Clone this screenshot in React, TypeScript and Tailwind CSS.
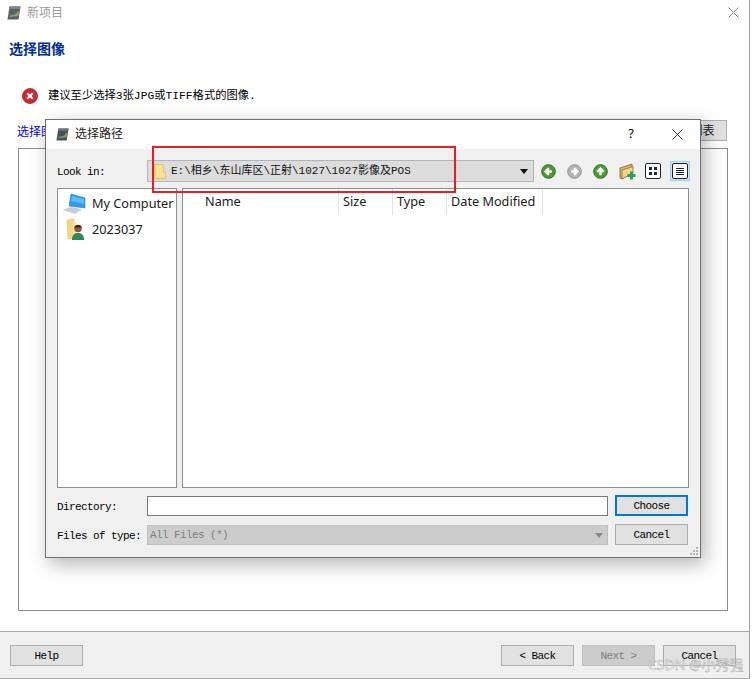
const mono = "font-['Liberation_Mono','Noto_Sans_CJK_SC',monospace]";
const sans = "font-['Noto_Sans','Noto_Sans_CJK_SC',sans-serif]";

function AppIcon({ className }: { className: string }) {
  return (
    <svg viewBox="0 0 14 14" className={className}>
      <path d="M2.5 0.5 H13.5 L11.5 13.5 H0.5 Z" fill="#46525a" />
      <path d="M3 9.5 L8 8.5 L12 4.5 L11.6 10 L2.5 11 Z" fill="#7d9a5a" />
      <path d="M2.5 0.5 H13.5 L13 3 H2 Z" fill="#6d7880" />
    </svg>
  );
}

function ErrorIcon() {
  return (
    <svg viewBox="0 0 16 16" className="w-4 h-4 shrink-0">
      <circle cx="8" cy="8" r="7.6" fill="#d7222e" />
      <circle cx="8" cy="8" r="7.6" fill="none" stroke="#7d1b22" strokeWidth="0.6" />
      <path d="M5.2 5.2 L10.8 10.8 M10.8 5.2 L5.2 10.8" stroke="#fff" strokeWidth="2.2" />
    </svg>
  );
}

function NavArrow({ color, dark, dir }: { color: string; dark: string; dir: 'left' | 'right' | 'up' }) {
  const paths = {
    left: 'M11.5 8 H6 M8.5 4.5 L5 8 L8.5 11.5',
    right: 'M4.5 8 H10 M7.5 4.5 L11 8 L7.5 11.5',
    up: 'M8 12 V6 M4.5 8.5 L8 5 L11.5 8.5',
  };
  return (
    <svg viewBox="0 0 16 16" className="w-[15px] h-[15px] shrink-0">
      <circle cx="8" cy="8" r="7.3" fill={color} stroke={dark} strokeWidth="1" />
      <path d={paths[dir]} stroke="#fff" strokeWidth="2.6" fill="none" />
    </svg>
  );
}

function NewFolderIcon() {
  return (
    <svg viewBox="0 0 17 17" className="w-[17px] h-[17px] shrink-0">
      <path d="M1 5 L10 2 L13 1 V10 L3 16 L1 15 Z" fill="#e2b45f" stroke="#7d6233" strokeWidth="0.8" />
      <path d="M3 7 L14 3.5 V10 L3 16 Z" fill="#f3d48b" stroke="#8a6c38" strokeWidth="0.8" />
      <path d="M12.5 8.5 V16.5 M8.5 12.5 H16.5" stroke="#2e9e57" strokeWidth="3" />
    </svg>
  );
}

function ViewButton({ active, children }: { active?: boolean; children: React.ReactNode }) {
  return (
    <div className={`w-[20px] h-[20px] shrink-0 flex items-center justify-center ${active ? 'bg-[#cce4f7] border border-[#99d1ff]' : ''}`}>
      <div className="w-[16px] h-[16px] bg-white border border-[#1c2430] rounded-[2px] flex items-center justify-center">
        {children}
      </div>
    </div>
  );
}

function ComputerIcon() {
  return (
    <svg viewBox="0 0 24 22" className="w-6 h-[22px] shrink-0">
      <path d="M9 1 L23 5 V15 L7 13 Z" fill="#2f9be6" stroke="#1a76ba" strokeWidth="0.5" />
      <path d="M10 3 L22 6 V11 L9 8 Z" fill="#5dbcf3" />
      <path d="M1 17 L8 14 L20 16 L13 21 Z" fill="#c9cdd1" />
    </svg>
  );
}

function UserFolderIcon() {
  return (
    <svg viewBox="0 0 20 24" className="w-5 h-6 shrink-0">
      <path d="M1 2 L8 1 V20 L2 21 Z" fill="#f6d77f" stroke="#d9b656" strokeWidth="0.5" />
      <rect x="7" y="4" width="3" height="16" fill="#fbe7a8" />
      <path d="M6 22 C6 16 9 15 12 15 C15 15 18 16 18 22 Z" fill="#2e8a5e" />
      <circle cx="12" cy="10.5" r="3.8" fill="#8a5c3e" />
      <path d="M8.3 9.5 C9 6 15 6 15.8 9.5 Z" fill="#33241b" />
    </svg>
  );
}

function QtButton({ label, variant = 'normal', className = '' }: { label: string; variant?: 'normal' | 'focus' | 'disabled'; className?: string }) {
  const look =
    variant === 'focus'
      ? 'bg-[#e1e1e1] border-2 border-[#0078d7] text-black'
      : variant === 'disabled'
        ? 'bg-[#cccccc] border border-[#bfbfbf] text-[#7f7f7f]'
        : 'bg-[#e1e1e1] border border-[#adadad] text-black';
  return (
    <button className={`w-[73px] h-[21px] shrink-0 pt-[2px] text-[11px] tracking-[-0.6px] leading-none whitespace-pre ${mono} ${look} ${className}`}>
      {label}
    </button>
  );
}

function ColumnHeader({ label, width }: { label: string; width: string }) {
  return (
    <div className={`${width} h-[26px] pl-[4px] flex items-center border-r border-[#e5e5e5] text-[12.7px] text-[#1a1a1a]`}>
      {label}
    </div>
  );
}

function FileDialog() {
  const label = `w-[90px] shrink-0 pt-[3px] whitespace-nowrap text-[11px] tracking-[-0.6px] text-black ${mono}`;
  return (
    <div className="absolute left-[45px] top-[119px] w-[656px] h-[439px] flex flex-col bg-[#f0f0f0] border border-[#6f6f6f] shadow-[4px_6px_18px_rgba(0,0,0,0.3)]">
      <div className="h-[29px] shrink-0 bg-white flex items-center pl-[10px] pb-[1px]">
        <AppIcon className="w-[13px] h-[13px]" />
        <span className={`ml-[6px] text-[12px] text-[#222] ${sans}`}>选择路径</span>
        <span className={`ml-auto mr-[38px] text-[13px] text-black ${sans}`}>?</span>
        <svg viewBox="0 0 12 12" className="w-[11px] h-[11px] mr-[17px]">
          <path d="M0.5 0.5 L11.5 11.5 M11.5 0.5 L0.5 11.5" stroke="#222" strokeWidth="1" />
        </svg>
      </div>

      <div className="flex-1 flex flex-col px-[11px] pt-[11px]">
        <div className="flex items-center h-[22px]">
          <span className={label}>Look in:</span>
          <div className="w-[387px] h-[22px] shrink-0 bg-[#dcdcdc] border border-[#b4b4b4] flex items-center pl-[6px]">
            <svg viewBox="0 0 13 16" className="w-[12px] h-[15px] shrink-0">
              <path d="M0.5 0.5 H10 V9 H12.5 V15.5 H0.5 Z" fill="#fbe39a" stroke="#eac04f" strokeWidth="1" />
            </svg>
            <span className={`ml-[5px] pt-[1px] text-[11px] text-[#111] ${mono}`}>E:\相乡\东山库区\正射\1027\1027影像及POS</span>
            <svg viewBox="0 0 8 5" className="w-[8px] h-[5px] ml-auto mr-[5px]">
              <path d="M0 0 H8 L4 5 Z" fill="#111" />
            </svg>
          </div>
          <div className="flex items-center ml-[7px] gap-[11px]">
            <NavArrow dir="left" color="#4c9a2f" dark="#2f6a1e" />
            <NavArrow dir="right" color="#b4b4b4" dark="#8f8f8f" />
            <NavArrow dir="up" color="#4c9a2f" dark="#2f6a1e" />
            <NewFolderIcon />
          </div>
          <div className="flex items-center ml-[7px] gap-[7px]">
            <ViewButton>
              <div className="grid grid-cols-2 gap-[2px]">
                <div className="w-[3px] h-[3px] bg-[#1c2430]" />
                <div className="w-[3px] h-[3px] bg-[#1c2430]" />
                <div className="w-[3px] h-[3px] bg-[#1c2430]" />
                <div className="w-[3px] h-[3px] bg-[#1c2430]" />
              </div>
            </ViewButton>
            <ViewButton active>
              <div className="flex flex-col gap-[1px]">
                <div className="w-[8px] h-[1px] bg-[#1c2430]" />
                <div className="w-[8px] h-[1px] bg-[#1c2430]" />
                <div className="w-[8px] h-[1px] bg-[#1c2430]" />
                <div className="w-[8px] h-[1px] bg-[#1c2430]" />
              </div>
            </ViewButton>
          </div>
        </div>

        <div className={`flex mt-[6px] gap-[5px] h-[300px] ${sans}`}>
          <div className="w-[120px] bg-white border border-[#8a8f96] pl-[4px] pt-[3px]">
            <div className="flex items-center h-[24px] gap-[6px] text-[12.7px] text-[#1a1a1a]">
              <ComputerIcon />
              <span>My Computer</span>
            </div>
            <div className="flex items-center h-[26px] gap-[6px] text-[12.7px] text-[#1a1a1a] pl-[4px] mt-[1px]">
              <UserFolderIcon />
              <span>2023037</span>
            </div>
          </div>
          <div className="flex-1 bg-white border border-[#8a8f96]">
            <div className="flex">
              <div className="w-[18px]" />
              <ColumnHeader label="Name" width="w-[138px]" />
              <ColumnHeader label="Size" width="w-[54px]" />
              <ColumnHeader label="Type" width="w-[54px]" />
              <ColumnHeader label="Date Modified" width="w-[96px]" />
            </div>
          </div>
        </div>

        <div className="flex items-center mt-[7px] h-[21px]">
          <span className={label}>Directory:</span>
          <div className="w-[461px] h-[20px] shrink-0 bg-white border border-[#7a7a7a]" />
          <QtButton label="Choose" variant="focus" className="ml-[7px]" />
        </div>
        <div className="flex items-center mt-[8px] h-[21px]">
          <span className={label}>Files of type:</span>
          <div className={`w-[461px] h-[20px] shrink-0 bg-[#cccccc] border border-[#bfbfbf] flex items-center pl-[2px] pt-[1px] text-[11px] tracking-[-0.6px] text-[#7f7f7f] ${mono}`}>
            All Files (*)
            <svg viewBox="0 0 8 5" className="w-[8px] h-[5px] ml-auto mr-[4px]">
              <path d="M0 0 H8 L4 5 Z" fill="#8a8a8a" />
            </svg>
          </div>
          <QtButton label="Cancel" className="ml-[7px]" />
        </div>
      </div>

      <svg viewBox="0 0 8 8" className="absolute right-[2px] bottom-[2px] w-[8px] h-[8px]">
        <path d="M6 0 H8 V2 H6 Z M3 3 H5 V5 H3 Z M6 3 H8 V5 H6 Z M0 6 H2 V8 H0 Z M3 6 H5 V8 H3 Z M6 6 H8 V8 H6 Z" fill="#b5b5b5" />
      </svg>
    </div>
  );
}

export default function App() {
  return (
    <div className="relative w-[753px] h-[679px] bg-white overflow-hidden">
      <div className="w-[750px] h-[679px] flex flex-col bg-white border-r border-[#a0a0a0]">
        <div className="h-[25px] shrink-0 flex items-center pl-[7px]">
          <AppIcon className="w-[14px] h-[14px] opacity-90" />
          <span className={`ml-[6px] text-[12px] text-[#9a9a9a] ${sans}`}>新项目</span>
          <svg viewBox="0 0 11 11" className="w-[11px] h-[11px] ml-auto mr-[10px]">
            <path d="M0.5 0.5 L10.5 10.5 M10.5 0.5 L0.5 10.5" stroke="#8a8a8a" strokeWidth="1" />
          </svg>
        </div>

        <div className={`pl-[9px] mt-[14px] h-[18px] flex items-center text-[14px] font-bold text-[#00308f] ${sans}`}>选择图像</div>

        <div className="flex items-center pl-[22px] mt-[31px] h-[16px] gap-[10px]">
          <ErrorIcon />
          <span className={`text-[11.3px] text-black ${mono}`}>建议至少选择3张JPG或TIFF格式的图像.</span>
        </div>

        <div className="flex items-center justify-between pl-[17px] pr-[22px] mt-[16px] h-[21px]">
          <span className={`pt-[2px] text-[12px] text-[#0000ff] ${sans}`}>选择图像列表</span>
          <button className={`w-[73px] h-[21px] bg-[#e1e1e1] border border-[#adadad] text-[12px] text-[#222] ${sans}`}>图像列表</button>
        </div>

        <div className="mx-[18px] mt-[7px] w-[710px] h-[463px] bg-white border border-[#8a8f96]" />

        <div className="mt-[20px] flex-1 bg-[#f0f0f0] border-t border-b border-[#a8a8a8] flex items-center pl-[10px] pr-[13px] pt-[1px]">
          <QtButton label="Help" />
          <QtButton label="< Back" className="ml-auto" />
          <QtButton label="Next >" variant="disabled" className="ml-[8px]" />
          <QtButton label="Cancel" className="ml-[8px]" />
        </div>
      </div>

      <FileDialog />

      <div className="absolute left-[152px] top-[146px] w-[304px] h-[47px] border-2 border-[#ed1c24]" />

      <div className={`absolute left-[648px] top-[654px] text-[14px] text-white/70 [-webkit-text-stroke:0.4px_#9a9a9a] ${sans}`}>CSDN @小秀强</div>
    </div>
  );
}
